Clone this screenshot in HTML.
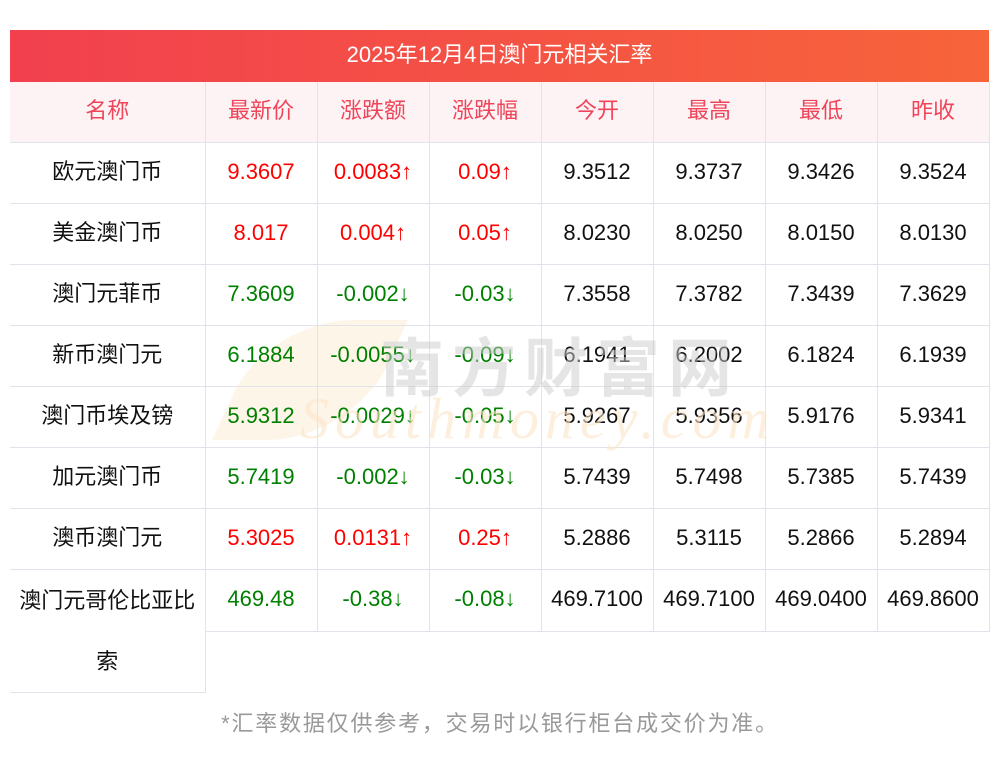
<!DOCTYPE html>
<html><head><meta charset="utf-8"><style>
*{margin:0;padding:0;box-sizing:border-box}
body{width:1000px;height:757px;background:#fff;font-family:"Liberation Sans","Noto Sans CJK SC",sans-serif;position:relative;overflow:hidden}
.bar{position:absolute;left:10px;top:30px;width:979px;height:52px;background:linear-gradient(90deg,#f2404f,#f7643a);color:#fff;font-size:22px;line-height:50px;text-align:center}
table{position:absolute;left:10px;top:82px;border-collapse:collapse;width:979px;table-layout:fixed}
td{height:61px;text-align:center;font-size:22px;border:1px solid #e2e2ea;color:#111;padding:0 0 2px 0;line-height:26px}
tr:first-child td{background:#fdf3f5;color:#ef4459;border-top:none;height:60px}
td:first-child{border-left:none}
.r{color:#f00}.g{color:#008000}
.wm1{position:absolute;left:380px;top:318px;font-size:64px;color:#ccc;opacity:.5;letter-spacing:8px;font-weight:bold}
.wm2{position:absolute;left:300px;top:385px;font-size:58px;color:#fde6c8;opacity:.6;font-style:italic;font-family:"Liberation Serif",serif;letter-spacing:6px}
.wm3{position:absolute;left:240px;top:320px;width:140px;height:120px;border-radius:60% 0 60% 0;background:#fdebd4;opacity:.5;transform:skewX(-25deg)}
.foot{position:absolute;left:0;width:1000px;top:707px;text-align:center;font-size:22px;color:#999;line-height:34px;letter-spacing:1.8px}
</style></head><body>
<div class="bar">2025年12月4日澳门元相关汇率</div>
<div class="wm3"></div>
<table>
<colgroup><col style="width:195px"><col style="width:112px"><col style="width:112px"><col style="width:112px"><col style="width:112px"><col style="width:112px"><col style="width:112px"><col style="width:112px"></colgroup>
<tr><td>名称</td><td>最新价</td><td>涨跌额</td><td>涨跌幅</td><td>今开</td><td>最高</td><td>最低</td><td>昨收</td></tr>
<tr><td>欧元澳门币</td><td class="r">9.3607</td><td class="r">0.0083↑</td><td class="r">0.09↑</td><td>9.3512</td><td>9.3737</td><td>9.3426</td><td>9.3524</td></tr>
<tr><td>美金澳门币</td><td class="r">8.017</td><td class="r">0.004↑</td><td class="r">0.05↑</td><td>8.0230</td><td>8.0250</td><td>8.0150</td><td>8.0130</td></tr>
<tr><td>澳门元菲币</td><td class="g">7.3609</td><td class="g">-0.002↓</td><td class="g">-0.03↓</td><td>7.3558</td><td>7.3782</td><td>7.3439</td><td>7.3629</td></tr>
<tr><td>新币澳门元</td><td class="g">6.1884</td><td class="g">-0.0055↓</td><td class="g">-0.09↓</td><td>6.1941</td><td>6.2002</td><td>6.1824</td><td>6.1939</td></tr>
<tr><td>澳门币埃及镑</td><td class="g">5.9312</td><td class="g">-0.0029↓</td><td class="g">-0.05↓</td><td>5.9267</td><td>5.9356</td><td>5.9176</td><td>5.9341</td></tr>
<tr><td>加元澳门币</td><td class="g">5.7419</td><td class="g">-0.002↓</td><td class="g">-0.03↓</td><td>5.7439</td><td>5.7498</td><td>5.7385</td><td>5.7439</td></tr>
<tr><td>澳币澳门元</td><td class="r">5.3025</td><td class="r">0.0131↑</td><td class="r">0.25↑</td><td>5.2886</td><td>5.3115</td><td>5.2866</td><td>5.2894</td></tr>
<tr><td rowspan="2" style="line-height:61px;height:121px;padding:0">澳门元哥伦比亚比<br>索</td><td class="g">469.48</td><td class="g">-0.38↓</td><td class="g">-0.08↓</td><td>469.7100</td><td>469.7100</td><td>469.0400</td><td>469.8600</td></tr>
<tr><td colspan="7" style="border:none;border-left:1px solid #e2e2ea;border-top:1px solid #e2e2ea;height:60px"></td></tr>
</table>
<div class="wm1">南方财富网</div>
<div class="wm2">Southmoney.com</div>
<div class="foot">*汇率数据仅供参考，交易时以银行柜台成交价为准。</div>
</body></html>
